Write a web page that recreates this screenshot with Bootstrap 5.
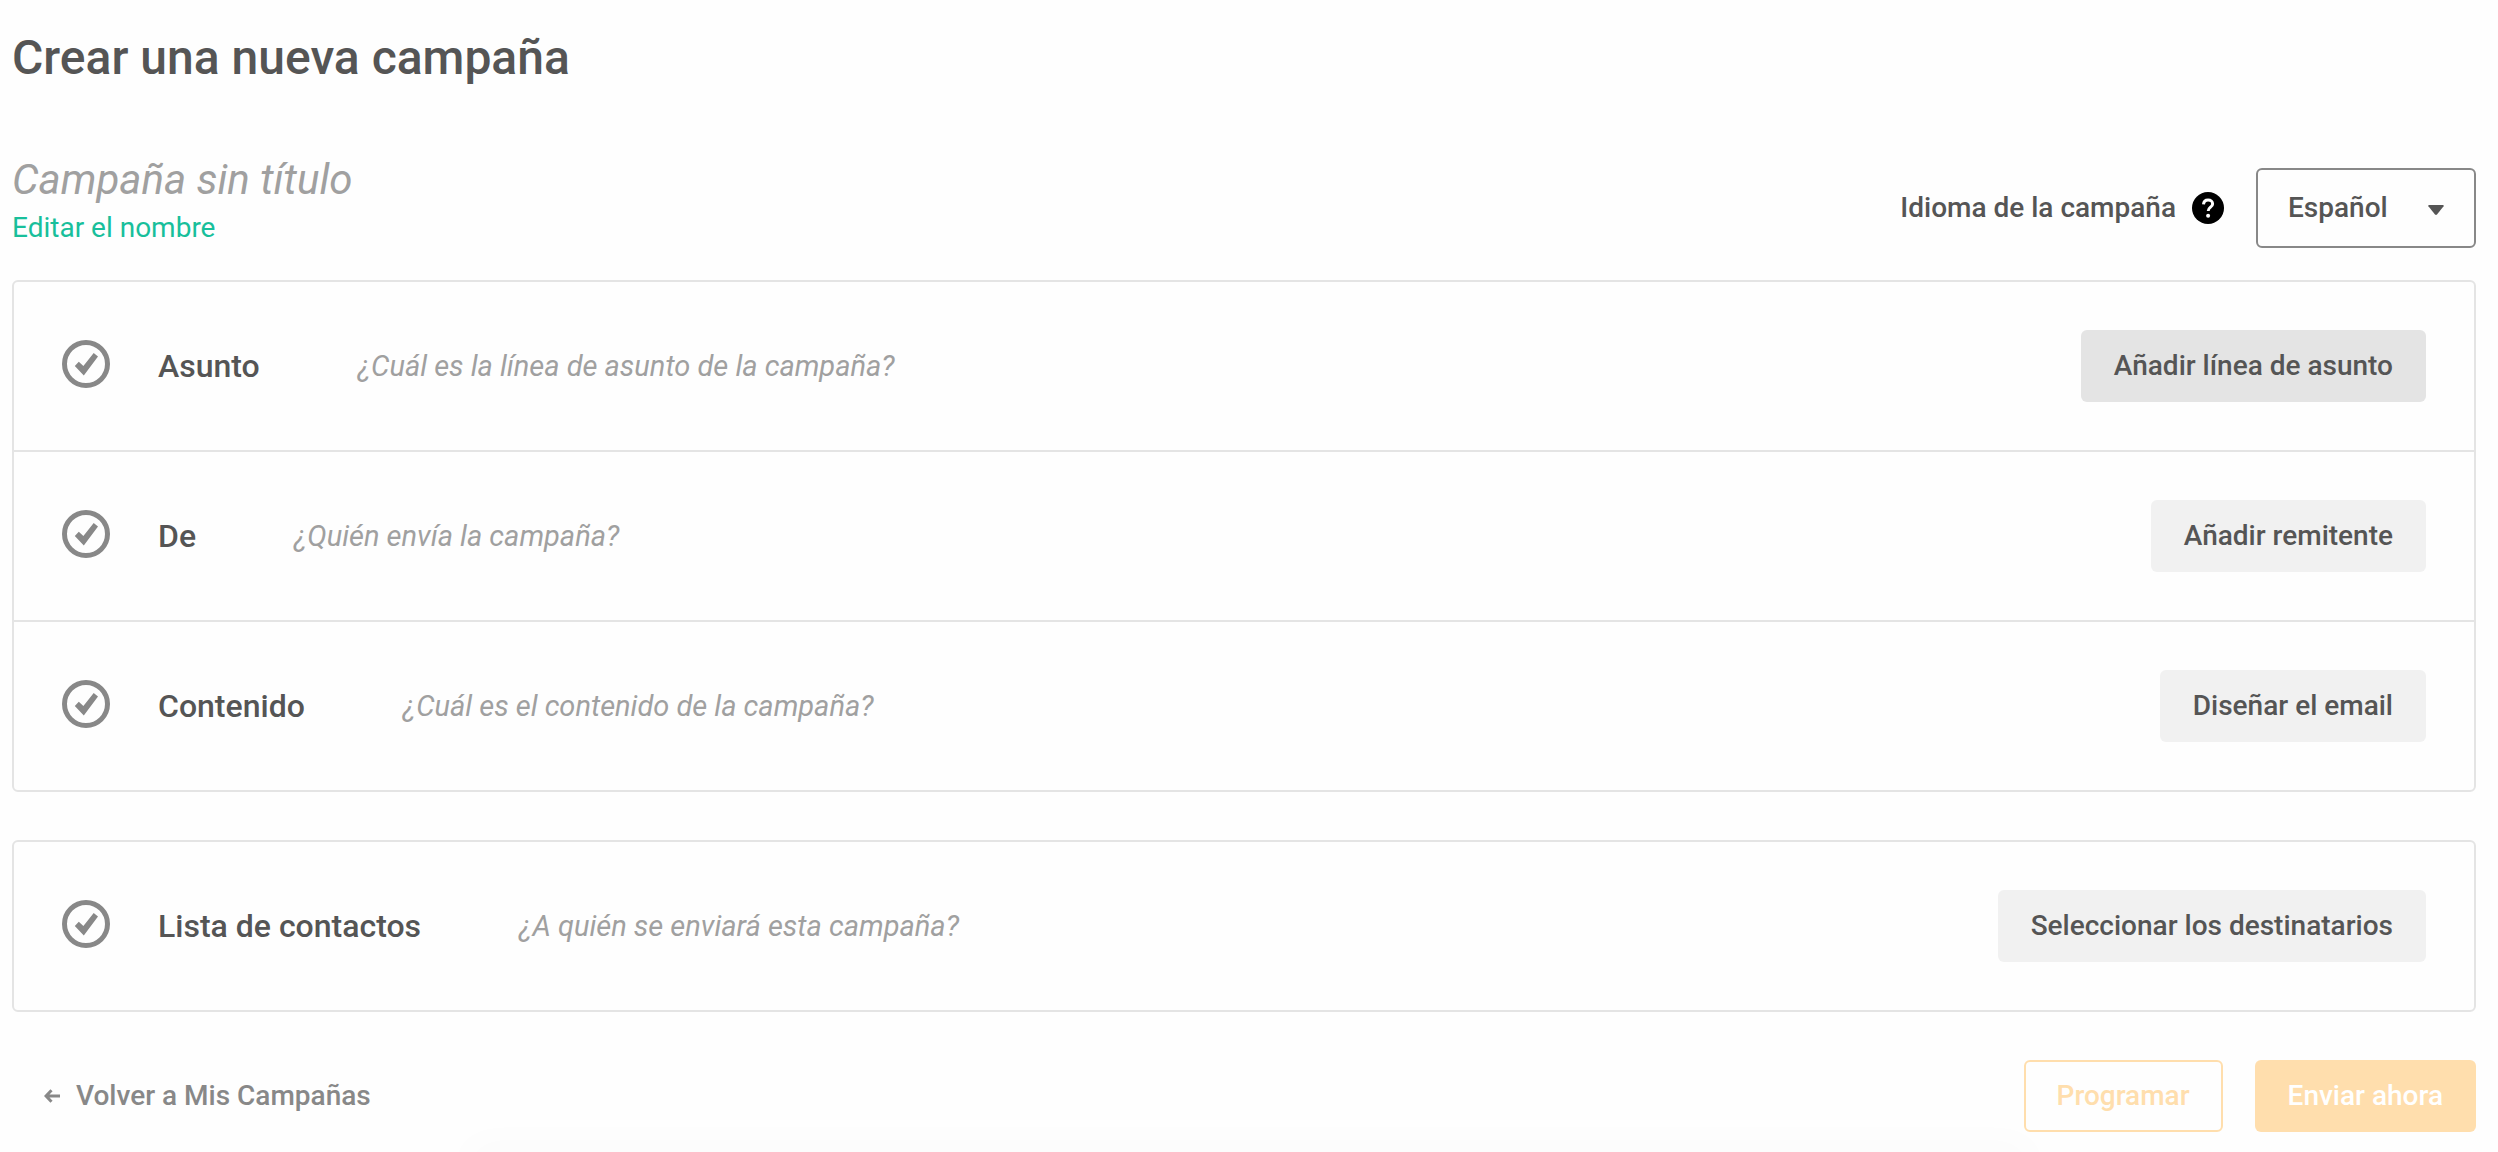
<!DOCTYPE html>
<html lang="es">
<head>
<meta charset="utf-8">
<meta name="viewport" content="width=device-width, initial-scale=1">
<title>Crear una nueva campaña</title>
<link href="https://cdn.jsdelivr.net/npm/bootstrap@5.3.0/dist/css/bootstrap.min.css" rel="stylesheet">
<style>
  :root { --ink: #555; --ink-soft: #888; --ink-hint: #a0a0a0; --line: #e4e4e4; --brand: #18bf9b; --accent: #ffdead; }
  body { font-family: Roboto, "Liberation Sans", sans-serif; font-size: 28px; line-height: 40px; color: var(--ink); background: #fefefe; overflow-x: hidden; }
  .page-shell { padding: 28px 22px 20px 12px; }
  .page-title { font-size: 48px; line-height: 60px; font-weight: 500; }
  .campaign-head { margin-top: 64px; margin-bottom: 32px; }
  .campaign-name { font-size: 42px; line-height: 56px; font-style: italic; font-weight: 400; color: var(--ink-hint); }
  .edit-link { color: var(--brand); }
  .edit-link:hover { color: #109c7e; }
  .lang-label { font-weight: 500; }
  .help-btn svg, .step-icon { display: block; }
  .lang-select { width: auto; min-width: 220px; height: 80px; padding: 0 72px 0 30px; font-size: 28px; line-height: 40px; font-weight: 500; color: var(--ink); border: 2px solid var(--ink-soft); border-radius: 6px; background-color: #fefefe;
    background-image: url("data:image/svg+xml,%3Csvg xmlns='http://www.w3.org/2000/svg' viewBox='0 0 16 10'%3E%3Cpath d='M1 0h14q1 .4.6 1.300L9 9.500q-1 .9-2 0L.4 1.300Q0 .4 1 0z' fill='%23555'/%3E%3C/svg%3E");
    background-size: 16px 10px; background-position: right 30px top 35px; }
  .step-list { border: 2px solid var(--line); border-radius: 6px; }
  .step-row { padding: 48px; }
  .step-row + .step-row { border-top: 2px solid var(--line); }
  .step-icon { width: 48px; height: 48px; margin-bottom: 4px; }
  .step-name { font-size: 32px; line-height: 40px; font-weight: 500; margin-left: 48px; }
  .step-hint { font-size: 29px; font-style: italic; color: var(--ink-hint); margin-left: 98px; }
  .btn-step { height: 72px; padding: 0 33px; font-size: 28px; line-height: 40px; font-weight: 500; border-radius: 6px; border: 0; color: var(--ink); background: #f1f1f1; }
  .btn-step:hover, .btn-step.active { color: var(--ink); background: #e4e4e4; }
  .btn-step.btn-plan:disabled { border: 2px solid var(--accent); padding: 0 31px; color: var(--accent); background: transparent; opacity: 1; }
  .btn-step.btn-send:disabled { color: #fff; background: var(--accent); opacity: 1; }
  .back-link { color: var(--ink-soft); font-weight: 500; padding-left: 32px; }
  .dock-shade { width: 62%; height: 20px; margin-bottom: -20px; box-shadow: 0 0 40px 8px rgba(0,0,0,.02); }
  .shade-clip { height: 40px; margin-top: -40px; overflow: hidden; pointer-events: none; }
</style>
<script src="https://cdn.jsdelivr.net/npm/bootstrap@5.3.0/dist/js/bootstrap.bundle.min.js"></script>
</head>
<body>
<svg class="d-none" aria-hidden="true">
  <symbol id="step-check" viewBox="0 0 48 48">
    <circle cx="24" cy="24" r="21.500" fill="none" stroke="#888" stroke-width="5"/>
    <path d="M12.800 26l4-4.200 4.600 4.100L31.700 13l4.300 3.600-14.200 19z" fill="#888"/>
  </symbol>
</svg>

<main class="page-shell">
  <h1 class="page-title mb-0">Crear una nueva campaña</h1>

  <div class="campaign-head d-flex flex-wrap justify-content-between align-items-end">
    <div>
      <h2 class="campaign-name mb-0">Campaña sin título</h2>
      <a class="edit-link d-inline-block text-decoration-none" href="#">Editar el nombre</a>
    </div>
    <div class="d-flex align-items-center">
      <label class="lang-label" for="lang">Idioma de la campaña</label>
      <button type="button" class="help-btn btn p-0 border-0 ms-3 me-2" aria-label="Ayuda">
        <svg width="32" height="32" viewBox="0 0 32 32"><circle cx="16" cy="16" r="16"/><path d="M11.500 12.400C11.700 9.600 13.500 8 16.100 8c2.700 0 4.500 1.600 4.500 3.900 0 3.300-4.400 3.300-4.400 7.100" fill="none" stroke="#fff" stroke-width="3"/><circle cx="16.100" cy="23.800" r="2" fill="#fff"/></svg>
      </button>
      <select id="lang" class="lang-select form-select ms-4"><option>Español</option></select>
    </div>
  </div>

  <section class="step-list">
    <div class="step-row d-flex align-items-center">
      <svg class="step-icon flex-shrink-0"><use href="#step-check"/></svg>
      <h3 class="step-name mb-0">Asunto</h3>
      <span class="step-hint">¿Cuál es la línea de asunto de la campaña?</span>
      <button type="button" class="btn btn-step active ms-auto">Añadir línea de asunto</button>
    </div>
    <div class="step-row d-flex align-items-center">
      <svg class="step-icon flex-shrink-0"><use href="#step-check"/></svg>
      <h3 class="step-name mb-0">De</h3>
      <span class="step-hint">¿Quién envía la campaña?</span>
      <button type="button" class="btn btn-step ms-auto">Añadir remitente</button>
    </div>
    <div class="step-row d-flex align-items-center">
      <svg class="step-icon flex-shrink-0"><use href="#step-check"/></svg>
      <h3 class="step-name mb-0">Contenido</h3>
      <span class="step-hint">¿Cuál es el contenido de la campaña?</span>
      <button type="button" class="btn btn-step ms-auto">Diseñar el email</button>
    </div>
  </section>

  <section class="step-list mt-5">
    <div class="step-row d-flex align-items-center">
      <svg class="step-icon flex-shrink-0"><use href="#step-check"/></svg>
      <h3 class="step-name mb-0">Lista de contactos</h3>
      <span class="step-hint">¿A quién se enviará esta campaña?</span>
      <button type="button" class="btn btn-step ms-auto">Seleccionar los destinatarios</button>
    </div>
  </section>

  <footer class="d-flex align-items-center justify-content-between mt-5">
    <a class="back-link d-flex align-items-center gap-3 text-decoration-none" href="#">
      <svg width="16" height="14" viewBox="0 0 16 14" fill="none" stroke="#888" stroke-width="3"><path d="M16 7H2M7.500 1.200L2 7l5.500 5.800"/></svg>
      Volver a Mis Campañas
    </a>
    <div class="d-flex">
      <button type="button" class="btn btn-step btn-plan me-2" disabled>Programar</button>
      <button type="button" class="btn btn-step btn-send ms-4" disabled>Enviar ahora</button>
    </div>
  </footer>
</main>
<div class="shade-clip d-flex justify-content-center align-items-end" aria-hidden="true"><div class="dock-shade"></div></div>
</body>
</html>
